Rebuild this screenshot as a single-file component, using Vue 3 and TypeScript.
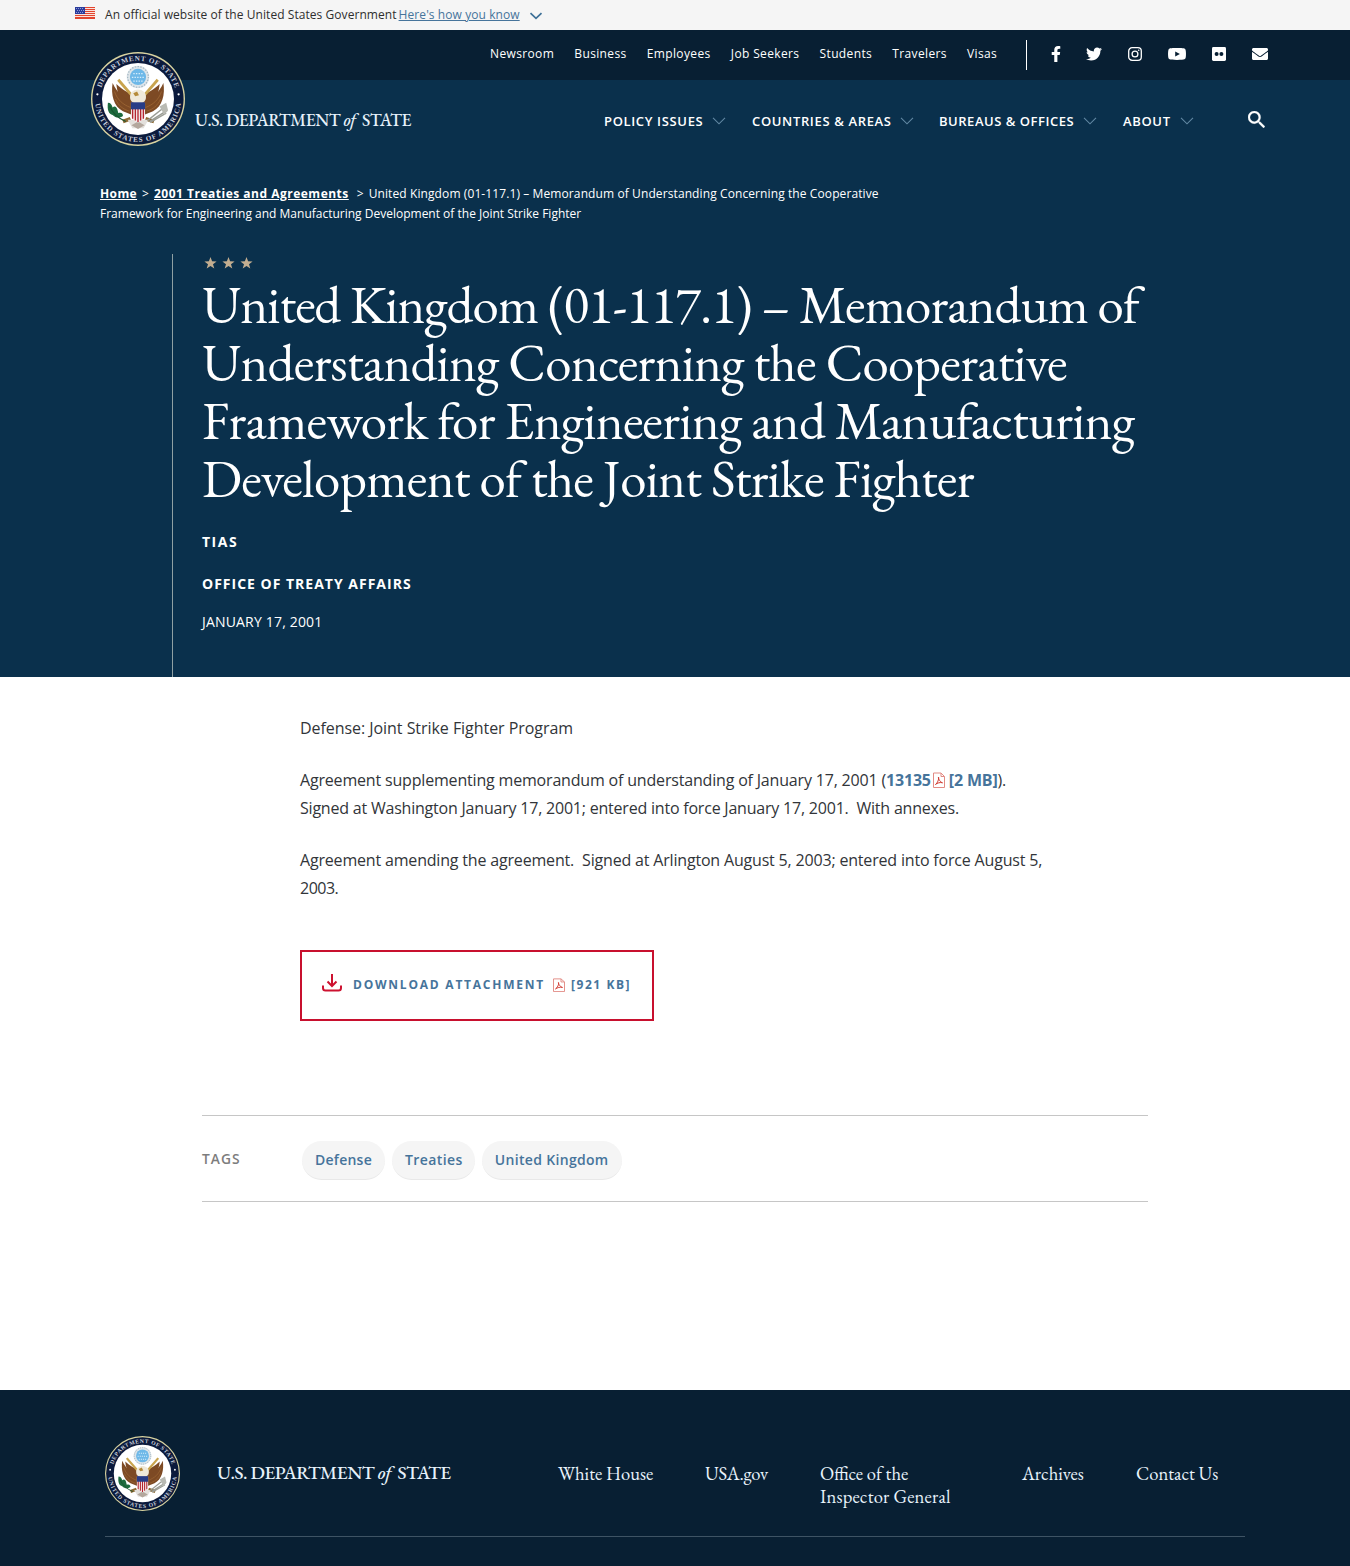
<script setup lang="ts">
interface NavItem { label: string }
const utility: string[] = ['Newsroom', 'Business', 'Employees', 'Job Seekers', 'Students', 'Travelers', 'Visas']
const menu: NavItem[] = [
  { label: 'POLICY ISSUES' },
  { label: 'COUNTRIES & AREAS' },
  { label: 'BUREAUS & OFFICES' },
  { label: 'ABOUT' },
]
const titleLines: string[] = [
  'United Kingdom (01-117.1) – Memorandum of',
  'Understanding Concerning the Cooperative',
  'Framework for Engineering and Manufacturing',
  'Development of the Joint Strike Fighter',
]
const tags: string[] = ['Defense', 'Treaties', 'United Kingdom']
const stripes: number[] = [0, 2, 4, 6, 8, 10]
</script>

<template>
  <div class="page">
    <div class="gov">
      <svg class="flag" width="20" height="12" viewBox="0 0 20 12">
        <rect width="20" height="12" fill="#fbe3dc" />
        <rect v-for="s in stripes" :key="s" :y="s" width="20" height="1" fill="#e2452f" />
        <rect y="11" width="20" height="1" fill="#e2452f" />
        <rect width="10" height="7" fill="#2b3c9c" />
        <path d="M1 1.5h8M2 3.5h7M1 5.5h8" stroke="#8d99d6" stroke-dasharray="1 1" />
      </svg>
      <span class="gov-text">An official website of the United States Government</span>
      <a class="gov-link">Here's how you know</a>
      <svg class="gov-chev" width="14" height="8" viewBox="0 0 14 8"><path d="M1.5 1.2 7 6.4l5.5-5.2" fill="none" stroke="#3d7097" stroke-width="1.7" /></svg>
    </div>

    <header class="header">
      <div class="topbar">
        <nav class="utility"><a v-for="u in utility" :key="u">{{ u }}</a></nav>
        <div class="social">
          <svg class="fb" width="10" height="16" viewBox="0 0 320 512"><path fill="#fff" d="M279.14 288l14.22-92.66h-88.91v-60.13c0-25.35 12.42-50.06 52.24-50.06h40.42V6.26S260.43 0 225.36 0c-73.22 0-121.08 44.38-121.08 124.72v70.62H22.89V288h81.39v224h100.17V288z" /></svg>
          <svg class="tw" width="16" height="16" viewBox="0 0 512 512"><path fill="#fff" d="M459.37 151.716c.325 4.548.325 9.097.325 13.645 0 138.72-105.583 298.558-298.558 298.558-59.452 0-114.68-17.219-161.137-47.106 8.447.974 16.568 1.299 25.34 1.299 49.055 0 94.213-16.568 130.274-44.832-46.132-.975-84.792-31.188-98.112-72.772 6.498.974 12.995 1.624 19.818 1.624 9.421 0 18.843-1.3 27.614-3.573-48.081-9.747-84.143-51.98-84.143-102.985v-1.299c13.969 7.797 30.214 12.67 47.431 13.319-28.264-18.843-46.781-51.005-46.781-87.391 0-19.492 5.197-37.36 14.294-52.954 51.655 63.675 129.3 105.258 216.365 109.807-1.624-7.797-2.599-15.918-2.599-24.04 0-57.828 46.782-104.934 104.934-104.934 30.213 0 57.502 12.67 76.67 33.137 23.715-4.548 46.456-13.32 66.599-25.34-7.798 24.366-24.366 44.833-46.132 57.827 21.117-2.273 41.584-8.122 60.426-16.243-14.292 20.791-32.161 39.308-52.628 54.253z" /></svg>
          <svg class="ig" width="14" height="14" viewBox="0 0 14 14" fill="none" stroke="#fff" stroke-width="1.3"><rect x=".7" y=".7" width="12.6" height="12.6" rx="3.4" /><circle cx="7" cy="7" r="2.9" /><circle cx="10.7" cy="3.3" r=".8" fill="#fff" stroke="none" /></svg>
          <svg class="yt" width="18" height="12" viewBox="0 0 18 13" preserveAspectRatio="none"><path fill="#fff" fill-rule="evenodd" d="M9 0c5 0 6.8.3 7.4.6.6.3 1 .9 1.2 1.6.5 2.300.5 6.300 0 8.600-.2.7-.6 1.200-1.200 1.500C15.600 12.700 13 13 9 13s-6.600-.3-7.400-.7C1 12 .6 11.500.4 10.800c-.5-2.300-.5-6.300 0-8.600C.6 1.500 1 .9 1.600.6 2.200.3 4 0 9 0zM7.200 3.800v5.400L11.900 6.500z" /></svg>
          <svg class="fl" width="14" height="14" viewBox="0 0 14 14"><rect width="14" height="14" rx="1.4" fill="#fff" /><circle cx="4.600" cy="7" r="2" fill="#081f33" /><circle cx="9.400" cy="7" r="2" fill="#081f33" /></svg>
          <svg class="ml" width="16" height="12" viewBox="0 0 512 384"><path fill="#fff" d="M502.300 126.800c3.900-3.100 9.700-.2 9.700 4.700V336c0 26.500-21.500 48-48 48H48c-26.500 0-48-21.500-48-48V131.600c0-5 5.700-7.800 9.700-4.700 22.400 17.400 52.100 39.500 154.100 113.600 21.100 15.400 56.700 47.800 92.200 47.600 35.700.3 72-32.800 92.300-47.600 102-74.100 131.600-96.300 154-113.700zM256 256c23.200.4 56.600-29.200 73.400-41.400 132.700-96.300 142.800-104.700 173.400-128.700 5.800-4.500 9.200-11.500 9.200-18.900V48c0-26.500-21.500-48-48-48H48C21.500 0 0 21.500 0 48v19c0 7.400 3.400 14.300 9.200 18.900 30.600 23.900 40.700 32.400 173.400 128.700 16.800 12.200 50.200 41.800 73.400 41.400z" /></svg>
        </div>
      </div>
      <div class="mainbar">
        <svg class="seal" viewBox="0 0 100 100">
          <defs>
            <path id="arc-top" d="M9.200 50a40.800 40.800 0 0 1 81.600 0" />
            <path id="arc-bottom" d="M4.200 50a45.800 45.800 0 0 0 91.600 0" />
            <symbol id="seal" viewBox="0 0 100 100">
              <circle cx="50" cy="50" r="50" fill="#d9d3a0" />
              <circle cx="50" cy="50" r="48.500" fill="#0b1a3c" />
              <circle cx="50" cy="50" r="38.300" fill="#fff" />
              <g fill="#c8cfdb" font-family="'Liberation Serif', serif" font-size="7.600" font-weight="700">
                <text><textPath href="#arc-top" startOffset="12" textLength="104">DEPARTMENT OF STATE</textPath></text>
                <text><textPath href="#arc-bottom" startOffset="5" textLength="134">UNITED STATES OF AMERICA</textPath></text>
              </g>
              <circle cx="6.800" cy="45" r="1.200" fill="#fff" /><circle cx="93.200" cy="45" r="1.200" fill="#fff" />
              <circle cx="50" cy="26.500" r="12" fill="#dfe6ea" />
              <circle cx="50" cy="26.500" r="11" fill="none" stroke="#9fb3c0" stroke-width="1.200" stroke-dasharray="1.500 1.500" />
              <circle cx="50" cy="26.500" r="8.600" fill="#6db8e8" />
              <path d="M45 23h10M43.500 27h13M45 31h10" stroke="#d6edfb" stroke-width="1.400" stroke-dasharray="1.500 1.300" />
              <path d="M27 34c1 12 7 26 17 28l3-17c-7-1-14-5-20-11z" fill="#7d4a24" />
              <path d="M73 34c-1 12-7 26-17 28l-3-17c7-1 14-5 20-11z" fill="#7d4a24" />
              <path d="M23 33c-2 12 1 25 11 30l10 4 1-14c-9-2-17-9-22-20z" fill="#7d4a24" />
              <path d="M77 33c2 12-1 25-11 30l-10 4-1-14c9-2 17-9 22-20z" fill="#7d4a24" />
              <path d="M25 42c3 9 9 14 17 17M26 50c3 7 8 11 15 13M75 42c-3 9-9 14-17 17M74 50c-3 7-8 11-15 13" fill="none" stroke="#a06a36" stroke-width=".8" />
              <path d="M45 48 29 29.500M55 48 71 29.500" stroke="#c9a44e" stroke-width="3" />
              <path d="M41.500 48c0-5 4-8 8.500-8s8.500 3 8.500 8-4 7-8.500 7-8.500-2-8.500-7z" fill="#efe9da" />
              <path d="m45 44 4-2 2 4-4 1z" fill="#b58b3a" />
              <path d="M42 71 34 74M58 71l9 3" stroke="#8d6a34" stroke-width="4" />
              <path d="M39 72h22l-5 9H44z" fill="#e3e0dc" /><path d="M43 78l7-4 7 4-7 4z" fill="#b3a79d" />
              <path d="M42.500 54h15v13c0 4-3.500 7-7.500 8-4-1-7.500-4-7.500-8z" fill="#f3e9e9" />
              <path d="M44.300 60v11M47.200 60v13M50 60v14.500M52.800 60v13M55.700 60v11" stroke="#b5252f" stroke-width="1.400" />
              <path d="M42.500 53.500h15V61h-15z" fill="#283c86" />
              <path d="M18 54c3 0 4 2 5 5 2-2 4-1 5 2l1 4c3-1 5 0 5 3-4 3-8 2-11-1-4-1-6-5-5-13z" fill="#1d6b3e" />
              <path d="M20 58c3 7 8 12 17 16" fill="none" stroke="#17552f" stroke-width="1.200" />
              <path d="m60 73 19-15M62 74l19-12M63 75l17-10" stroke="#9a9c94" stroke-width="1.500" />
              <path d="m73 58 7-4 2 8-4 5z" fill="#b9bab3" />
            </symbol>
          </defs>
          <use href="#seal" width="100" height="100" />
        </svg>
        <div class="wordmark">U.S. DEPARTMENT <i>of</i> STATE</div>
        <nav class="menu">
          <a v-for="(m, i) in menu" :key="m.label" :class="'m' + i">{{ m.label }}<svg width="14" height="8" viewBox="0 0 14 8"><path d="M1 .8 7 6.800l6-6" fill="none" stroke="#6288a3" stroke-width="1.100" /></svg></a>
        </nav>
        <svg class="search" width="17" height="17" viewBox="3 3 17.500 17.500"><path fill="#fff" stroke="#fff" stroke-width=".3" d="M15.500 14h-.79l-.28-.27A6.471 6.471 0 0 0 16 9.500 6.500 6.500 0 1 0 9.500 16c1.610 0 3.090-.59 4.230-1.570l.27.28v.79l5 4.990L20.490 19l-4.990-5zm-6 0C7.010 14 5 11.990 5 9.500S7.010 5 9.500 5 14 7.010 14 9.500 11.990 14 9.500 14z" /></svg>
      </div>
    </header>

    <section class="hero">
      <div class="crumbs"><b class="home">Home</b><span class="gt">&gt;</span><b>2001 Treaties and Agreements</b><span class="gt wide">&gt;</span><span class="here">United Kingdom (01-117.1) – Memorandum of Understanding Concerning the Cooperative</span><br />Framework for Engineering and Manufacturing Development of the Joint Strike Fighter</div>
      <div class="heading">
        <svg class="stars" width="50" height="12" viewBox="0 0 50 12" fill="#c2ad90"><path v-for="n in 3" :key="n" :transform="`translate(${(n - 1) * 18} 0)`" d="M6.500 0 8.100 4.300 12.600 4.400 9 7.200 10.300 11.500 6.500 9 2.700 11.500 4 7.200.4 4.400 4.900 4.300z" /></svg>
        <h1><span v-for="(l, i) in titleLines" :key="l" :class="'t' + i">{{ l }}</span></h1>
        <p class="meta tias">TIAS</p>
        <p class="meta office">OFFICE OF TREATY AFFAIRS</p>
        <p class="date">JANUARY 17, 2001</p>
      </div>
    </section>

    <main class="main">
      <article class="body">
        <p class="lead">Defense: Joint Strike Fighter Program</p>
        <p>Agreement supplementing memorandum of understanding of January 17, 2001 (<a>13135<svg class="pdf" width="12" height="16" viewBox="0 0 12 16"><path d="M.5 1h7.500l3.500 3.500V15.500H.5zM8 1v3.500h3.500" fill="#fff" stroke="#e28b84" /><path d="M2.500 12.500C4.500 11 6 7.500 5.600 5.200c-.6-1.200 0 4.300 3.900 5.600-2-.8-5.500.2-7 1.700z" fill="none" stroke="#d0392f" stroke-width="1" /></svg>[2 MB]</a>).<br /><span class="signed">Signed at Washington January 17, 2001; entered into force January 17, 2001.&nbsp; With annexes.</span></p>
        <p>Agreement amending the agreement.&nbsp; Signed at Arlington August 5, 2003; entered into force August 5,<br /><span class="year">2003.</span></p>
        <a class="download">
          <svg class="dl" width="20" height="18" viewBox="0 0 20 18" fill="none" stroke="#cd1230" stroke-width="2"><path d="M10 0v11.500M5.500 7.500 10 12l4.500-4.500M1 11.500V14q0 2.500 2.500 2.500h13Q19 16.500 19 14v-2.500" /></svg>
          <span class="dl-label">DOWNLOAD ATTACHMENT</span>
          <svg class="pdf small" width="12" height="14" viewBox="0 0 12 16" preserveAspectRatio="none"><path d="M.5 1h7.500l3.500 3.500V15.500H.5zM8 1v3.500h3.500" fill="#fff" stroke="#e28b84" /><path d="M2.500 12.500C4.500 11 6 7.500 5.600 5.200c-.6-1.200 0 4.300 3.900 5.600-2-.8-5.500.2-7 1.700z" fill="none" stroke="#d0392f" /></svg>
          <span class="dl-size">[921 KB]</span>
        </a>
      </article>
      <div class="tags">
        <span class="tags-label">TAGS</span>
        <a v-for="(t, i) in tags" :key="t" class="tag" :class="'g' + i">{{ t }}</a>
      </div>
    </main>

    <footer class="footer">
      <div class="foot-row">
        <svg class="foot-seal" viewBox="0 0 100 100"><use href="#seal" width="100" height="100" /></svg>
        <div class="wordmark foot-mark">U.S. DEPARTMENT <i>of</i> STATE</div>
        <nav class="foot-nav">
          <a class="f0">White House</a><a class="f1">USA.gov</a><a class="f2">Office of the<br /><span>Inspector General</span></a><a class="f3">Archives</a><a class="f4">Contact Us</a>
        </nav>
      </div>
    </footer>
  </div>
</template>

<style>
body { margin: 0; background: #fff; }
</style>

<style scoped>
.page { width: 1350px; height: 1566px; overflow: hidden; display: flex; flex-direction: column; font-family: "Open Sans", sans-serif; color: #323539; }
svg { display: block; flex: none; }
p, h1 { margin: 0; }
.gov { height: 30px; background: #f5f5f5; display: flex; align-items: flex-start; padding-left: 75px; font-size: 12px; line-height: 16px; color: #2e2e2e; white-space: nowrap; }
.flag { margin: 7px 10px 0 0; }
.gov-text { margin: 7px 2px 0 0; letter-spacing: .06px; }
.gov-link { margin-top: 7px; color: #46749b; text-decoration: underline; letter-spacing: .08px; }
.gov-chev { margin: 12px 0 0 9px; }
.header { background: #0a304c; height: 150px; }
.topbar { height: 50px; background: #081f33; display: flex; align-items: center; padding-left: 490px; }
.utility { display: flex; gap: 20.200px; font-size: 12px; letter-spacing: .36px; color: #fff; line-height: 16px; margin-top: -2px; white-space: nowrap; width: 536px; }
.social { box-sizing: border-box; height: 30px; border-left: 1px solid #fff; display: flex; align-items: center; padding: 0 0 2px 24px; }
.tw { margin-left: 25px; }
.ig { margin-left: 26px; }
.yt { margin-left: 26px; }
.fl { margin-left: 26px; }
.ml { margin-left: 26px; }
.mainbar { height: 100px; display: flex; align-items: flex-start; padding-left: 91px; }
.seal { width: 94px; height: 94px; margin-top: -28px; }
.wordmark { color: #e6f1fa; font-family: "EB Garamond", "Liberation Serif", serif; font-weight: 500; font-size: 17.500px; line-height: 22px; white-space: nowrap; }
.wordmark i { margin-right: 3px; }
.mainbar .wordmark { margin: 29px 0 0 10px; width: 409px; letter-spacing: -.44px; }
.menu { display: flex; margin-top: 32px; font-weight: 600; font-size: 13px; line-height: 18px; letter-spacing: .65px; color: #fff; white-space: nowrap; }
.menu a { display: flex; align-items: center; justify-content: space-between; }
.m0 { width: 122px; margin-right: 26px; }
.m1 { width: 162px; margin-right: 25px; }
.m2 { width: 158px; margin-right: 26px; letter-spacing: .53px; }
.m3 { width: 71px; margin-right: 54px; }
.search { margin-top: 31px; }
.hero { height: 497px; background: #0a304c; color: #fff; }
.crumbs { padding: 4px 0 0 100px; font-size: 12px; line-height: 20px; white-space: nowrap; }
.crumbs b { text-decoration: underline; letter-spacing: .5px; }
.crumbs .home { letter-spacing: .4px; }
.here { letter-spacing: .1px; }
.gt { margin: 0 5px; }
.gt.wide { margin-left: 8px; }
.heading { box-sizing: border-box; margin: 30px 0 0 172px; height: 423px; border-left: 1px solid #8fa0a3; padding: 3px 0 0 29px; }
.stars { margin-left: 2px; }
h1 { margin-top: 7px; font-family: "EB Garamond", "Liberation Serif", serif; font-weight: 400; font-size: 53px; line-height: 58px; white-space: nowrap; }
h1 span { display: block; width: max-content; }
.t0 { letter-spacing: -.9px; }
.t1 { letter-spacing: -.74px; }
.t2 { letter-spacing: -.7px; }
.t3 { letter-spacing: -.77px; }
.meta { font-size: 14px; font-weight: 700; letter-spacing: 1px; line-height: 20px; }
.tias { margin-top: 24px; letter-spacing: 1.500px; }
.office { margin-top: 22px; }
.date { margin-top: 18px; font-size: 14px; line-height: 20px; letter-spacing: .18px; }
.main { height: 713px; }
.body { padding: 37px 0 0 300px; font-size: 16px; line-height: 28px; letter-spacing: -.18px; white-space: nowrap; }
.body p { margin-bottom: 24px; }
.body .lead { letter-spacing: -.05px; }
.signed { letter-spacing: -.21px; }
.year { letter-spacing: -.5px; }
.body p a { color: #46749b; font-weight: 700; }
.body p a svg { vertical-align: -2px; margin: 0 4px 0 2px; }
.pdf { display: inline-block; }
.download { box-sizing: border-box; display: flex; align-items: flex-start; width: 354px; height: 71px; margin-top: 48px; border: 2px solid #c8102e; padding: 19px 0 0 20px; font-size: 12px; font-weight: 700; letter-spacing: 1.550px; color: #46749b; }
.dl { margin-top: 3px; }
.dl-label { margin-left: 11px; width: 197px; letter-spacing: 1.770px; }
.small { margin: 7px 6px 0 3px; }
.tags { box-sizing: border-box; width: 946px; height: 87px; margin: 94px 0 0 202px; border-top: 1px solid #c6c6c6; border-bottom: 1px solid #c6c6c6; display: flex; align-items: center; font-size: 14px; font-weight: 600; color: #46749b; }
.tags-label { width: 100px; color: #7d7d7d; letter-spacing: 1px; font-size: 13.800px; }
.tag { background: #f5f5f5; border-radius: 20px; height: 38px; line-height: 38px; padding: 0 13px; margin: 3px 7px 0 0; border-bottom: 1px solid #e8e8e8; letter-spacing: .25px; }
.g1 { letter-spacing: .42px; padding-right: 12px; }
.g2 { letter-spacing: .32px; }
.footer { flex: 1; background: #081f33; color: #fff; }
.foot-row { margin: 0 105px; height: 146px; border-bottom: 1px solid #3e5364; display: flex; }
.foot-seal { width: 75px; height: 75px; margin-top: 46px; }
.foot-mark { margin: 72px 0 0 37px; width: 341px; font-size: 19px; letter-spacing: -.5px; }
.foot-nav { display: flex; margin-top: 72px; font-family: "EB Garamond", "Liberation Serif", serif; font-size: 18.600px; line-height: 23px; white-space: nowrap; color: #e9f3fb; }
.f0 { width: 147px; }
.f1 { width: 115px; letter-spacing: -.25px; }
.f2 { width: 202px; }
.f2 span { letter-spacing: .2px; }
.f3 { width: 114px; }
</style>
